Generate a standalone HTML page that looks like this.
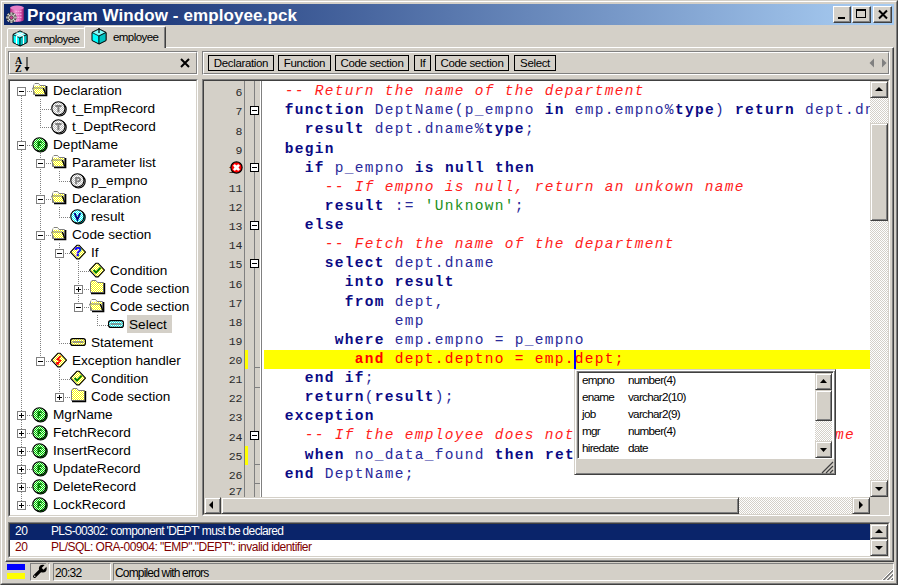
<!DOCTYPE html>
<html>
<head>
<meta charset="utf-8">
<title>Program Window - employee.pck</title>
<style>
*{box-sizing:border-box;margin:0;padding:0}
html,body{width:898px;height:585px;overflow:hidden;background:#d4d0c8;font-family:"Liberation Sans",sans-serif;}
body{position:relative}
.a{position:absolute}
svg{position:absolute;overflow:visible}
#title{left:4px;top:4px;width:890px;height:21px;background:linear-gradient(to right,#0a246a 0%,#0a246a 3%,#a6caf0 97%,#a6caf0 100%);}
#title .txt{left:23px;top:1px;color:#fff;font-weight:bold;font-size:17px;line-height:21px;white-space:nowrap;letter-spacing:0.1px}
.cbtn{top:6px;width:18px;height:17px;background:#d4d0c8;border:1px solid;border-color:#fff #404040 #404040 #fff;box-shadow:inset -1px -1px 0 #808080;}
.sb{background:#d4d0c8;border:1px solid;border-color:#d4d0c8 #404040 #404040 #d4d0c8;box-shadow:inset 1px 1px 0 #fff, inset -1px -1px 0 #808080;}
.track{background-color:#fff;background-image:conic-gradient(#d4d0c8 25%,#fff 0 50%,#d4d0c8 0 75%,#fff 0);background-size:2px 2px;}
.ti{font-size:13.6px;line-height:18px;height:18px;white-space:nowrap;color:#000;}
.dotv{width:1px;background-image:linear-gradient(#808080 50%,transparent 50%);background-size:1px 2px;}
.doth{height:1px;background-image:linear-gradient(to right,#808080 50%,transparent 50%);background-size:2px 1px;}
.ebox{width:9px;height:9px;background:#fff;border:1px solid #808080;}
.ebox i{position:absolute;left:1px;top:3px;width:5px;height:1px;background:#000}
.ebox b{position:absolute;left:3px;top:1px;width:1px;height:5px;background:#000}
.ln{left:204px;width:39px;text-align:right;font-family:"Liberation Mono",monospace;font-size:11.5px;letter-spacing:-0.3px;line-height:19.2px;height:19.2px;color:#2a2a2a;}
.cl{left:285px;font-family:"Liberation Mono",monospace;font-size:14.5px;letter-spacing:1.3px;line-height:19.2px;height:19.2px;white-space:pre;color:#2a2a9a;}
.cl b{font-weight:bold;color:#0a0a84}
.cl i{color:#ff1c1c;font-style:italic}
.cl u{text-decoration:none;color:#209020}
.cl em{font-style:normal;color:#ff0000}
.cl em b{color:#ff0000}
.fold{left:249px;width:9px;height:9px;background:#fff;border:1px solid #000;}
.fold i{position:absolute;left:1px;top:3px;width:5px;height:1px;background:#000}
.bc{top:55px;height:16px;border:1px solid #000;font-size:11.5px;line-height:14px;text-align:center;color:#000;white-space:nowrap;letter-spacing:-0.35px}
.pi{font-size:11.7px;line-height:17px;height:17px;color:#000;white-space:nowrap;letter-spacing:-0.72px}
.msg{font-size:12px;line-height:16px;height:16px;white-space:nowrap;letter-spacing:-0.3px}
.st{font-size:12px;line-height:16px;height:16px;white-space:nowrap;color:#000;letter-spacing:-0.3px}
.sunk{border:1px solid;border-color:#808080 #fff #fff #808080;}
</style>
</head>
<body>
<div class="a " style="left:0px;top:0px;width:898px;height:585px;border:1px solid;border-color:#d4d0c8 #404040 #404040 #d4d0c8;"></div>
<div class="a " style="left:1px;top:1px;width:896px;height:583px;border:1px solid;border-color:#fff #808080 #808080 #fff;"></div>
<div id="title" class="a"><div class="a txt">Program Window - employee.pck</div></div>
<svg class="a" style="left:5px;top:4px" width="20" height="20" viewBox="0 0 20 20"><defs><linearGradient id="cyl" x1="0" x2="1" y1="0" y2="0"><stop offset="0" stop-color="#b02878"/><stop offset="0.35" stop-color="#f090d0"/><stop offset="0.7" stop-color="#e060b8"/><stop offset="1" stop-color="#a02070"/></linearGradient></defs><path d="M5.2 3.6 V15.8 C5.2 18.6 18.8 18.6 18.8 15.8 V3.6 Z" fill="url(#cyl)"/><ellipse cx="12" cy="3.8" rx="6.8" ry="2.2" fill="#e880c8"/><path d="M10.5 7.3 h6 M10.5 10.3 h6 M10.5 13.3 h6 M10.5 16 h5" stroke="#f8c0e8" stroke-width="1.1" stroke-dasharray="1.6 0.6" fill="none"/><path d="M9.60 13.60 L11.50 13.60 M8.66 15.86 L10.01 17.21 M6.40 16.80 L6.40 18.70 M4.14 15.86 L2.79 17.21 M3.20 13.60 L1.30 13.60 M4.14 11.34 L2.79 9.99 M6.40 10.40 L6.40 8.50 M8.66 11.34 L10.01 9.99 " stroke="#303030" stroke-width="3.2" fill="none"/><path d="M9.60 13.60 L11.50 13.60 M8.66 15.86 L10.01 17.21 M6.40 16.80 L6.40 18.70 M4.14 15.86 L2.79 17.21 M3.20 13.60 L1.30 13.60 M4.14 11.34 L2.79 9.99 M6.40 10.40 L6.40 8.50 M8.66 11.34 L10.01 9.99 " stroke="#e8e8e0" stroke-width="2" fill="none"/><circle cx="6.4" cy="13.6" r="3.6" fill="#e8e8e0" stroke="#303030" stroke-width="0.6"/><circle cx="6.4" cy="13.6" r="1.9" fill="#c04890" stroke="#303030" stroke-width="0.8"/></svg>
<div class="a cbtn" style="left:833px;top:6px;width:18px;height:17px;"></div>
<div class="a cbtn" style="left:852px;top:6px;width:19px;height:17px;"></div>
<div class="a cbtn" style="left:873px;top:6px;width:19px;height:17px;"></div>
<div class="a " style="left:838px;top:17px;width:7px;height:2px;background:#000"></div>
<div class="a " style="left:856px;top:9px;width:10px;height:9px;border:1px solid #000;border-top:2px solid #000"></div>
<svg class="a" style="left:877.5px;top:10px" width="10" height="9" viewBox="0 0 10 9"><path d="M1 0.5 L9 8.5 M9 0.5 L1 8.5" stroke="#000" stroke-width="2" fill="none"/></svg>
<div class="a " style="left:5px;top:47px;width:889px;height:515px;border:1px solid;border-color:#fff #404040 #404040 #fff;box-shadow:inset -1px -1px 0 #808080;"></div>
<div class="a " style="left:7px;top:28px;width:78px;height:19px;border:1px solid;border-color:#fff transparent transparent #fff;border-bottom:none;border-radius:2px 2px 0 0;background:#d4d0c8;"></div>
<div class="a " style="left:84px;top:26px;width:82px;height:22px;border:1px solid;border-color:#fff #404040 transparent #fff;border-bottom:none;border-radius:2px 2px 0 0;background:#d4d0c8;box-shadow:inset -1px 0 0 #808080;"></div>
<div class="a" style="left:34px;top:31px;font-size:11.5px;line-height:16px;letter-spacing:-0.56px">employee</div>
<div class="a" style="left:113px;top:29px;font-size:11.5px;line-height:16px;letter-spacing:-0.56px">employee</div>
<svg class="a" style="left:11.5px;top:29.5px" width="16" height="17" viewBox="0 0 16 17"><path d="M8 1 L15 4.5 V12.5 L8 16 L1 12.5 V4.5 Z" fill="#00ffff" stroke="#000" stroke-width="1"/><path d="M8 1 L15 4.5 L8 8 L1 4.5 Z" fill="#80ffff" stroke="#000" stroke-width="0.8"/><path d="M8 8 V16" stroke="#000" stroke-width="0.8"/><path d="M8 8 L15 4.5 V12.5 L8 16 Z" fill="#00c0c0" stroke="#000" stroke-width="0.8"/><path d="M4.5 2.8 L11.5 6.3 V14 M11.5 2.8 L4.5 6.3 V14" stroke="#fff" stroke-width="1.2" fill="none"/></svg><svg class="a" style="left:90.5px;top:28px" width="16" height="17" viewBox="0 0 16 17"><path d="M8 1 L15 4.5 V12.5 L8 16 L1 12.5 V4.5 Z" fill="#00ffff" stroke="#000" stroke-width="1"/><path d="M8 1 L15 4.5 L8 8 L1 4.5 Z" fill="#80ffff" stroke="#000" stroke-width="0.8"/><path d="M8 8 V16" stroke="#000" stroke-width="0.8"/><path d="M8 8 L15 4.5 V12.5 L8 16 Z" fill="#00c0c0" stroke="#000" stroke-width="0.8"/><path d="M8 0 V5" stroke="#000" stroke-width="1.2"/></svg>
<div class="a " style="left:8px;top:51px;width:190px;height:24px;border:1px solid;border-color:#808080 #fff #fff #808080;"></div>
<div class="a " style="left:9px;top:52px;width:188px;height:22px;border:1px solid;border-color:#fff #808080 #808080 #fff;"></div>
<div class="a" style="left:15px;top:57px;font-size:10px;font-weight:bold;line-height:8px;font-family:'Liberation Serif',serif;color:#000">A<br>Z</div><svg class="a" style="left:23.5px;top:57px" width="6" height="15" viewBox="0 0 6 15"><path d="M3 0 V11" stroke="#000" stroke-width="1"/><path d="M0.4 10 H5.6 L3 14.6 Z" fill="#000"/></svg>
<svg class="a" style="left:180px;top:58px" width="10" height="10" viewBox="0 0 10 10"><path d="M1 1 L9 9 M9 1 L1 9" stroke="#000" stroke-width="2" fill="none"/></svg>
<div class="a " style="left:8px;top:79px;width:190px;height:438px;border:1px solid;border-color:#808080 #fff #fff #808080;background:#fff"></div>
<div class="a " style="left:9px;top:80px;width:188px;height:436px;border:1px solid;border-color:#404040 #d4d0c8 #d4d0c8 #404040;"></div>
<svg class="a" width="0" height="0" style="left:0;top:0"><defs>
<pattern id="dy" width="2" height="2" patternUnits="userSpaceOnUse"><rect width="2" height="2" fill="#ffff00"/><rect width="1" height="1" fill="#fff"/><rect x="1" y="1" width="1" height="1" fill="#fff"/></pattern>
<pattern id="dgy" width="2" height="2" patternUnits="userSpaceOnUse"><rect width="2" height="2" fill="#c0c0c0"/><rect width="1" height="1" fill="#fff"/><rect x="1" y="1" width="1" height="1" fill="#fff"/></pattern>
<pattern id="dgn" width="2" height="2" patternUnits="userSpaceOnUse"><rect width="2" height="2" fill="#00c800"/><rect width="1" height="1" fill="#d8ffd8"/><rect x="1" y="1" width="1" height="1" fill="#d8ffd8"/></pattern>
<pattern id="dc" width="2" height="2" patternUnits="userSpaceOnUse"><rect width="2" height="2" fill="#00ffff"/><rect width="1" height="1" fill="#fff"/><rect x="1" y="1" width="1" height="1" fill="#fff"/></pattern>
</defs></svg>
<div class="a dotv" style="left:21px;top:96px;height:409px"></div>
<div class="a dotv" style="left:40px;top:99px;height:29px"></div>
<div class="a dotv" style="left:40px;top:153px;height:209px"></div>
<div class="a dotv" style="left:59px;top:171px;height:11px"></div>
<div class="a dotv" style="left:59px;top:207px;height:11px"></div>
<div class="a dotv" style="left:59px;top:243px;height:101px"></div>
<div class="a dotv" style="left:78px;top:261px;height:47px"></div>
<div class="a dotv" style="left:97px;top:315px;height:11px"></div>
<div class="a dotv" style="left:59px;top:369px;height:29px"></div>
<div class="a doth" style="left:27px;top:91px;width:5px"></div>
<div class="a ebox" style="left:17px;top:87px"><i></i></div>
<svg class="a" style="left:32px;top:82px" width="16" height="14" viewBox="0 0 16 14"><path d="M1.5 12.5 V3.5 L3 1.5 H6.5 L8 3.5 H13.5 V12.5 Z" fill="url(#dy)" stroke="#808080"/><path d="M2 2.5 L3.2 2 H6.2 L7.6 3.8 H2 Z" fill="#fff"/><path d="M14.6 4 V13.5 H3" fill="none" stroke="#000" stroke-width="1.5"/><path d="M0.5 6 H11.2 L13.6 12.5 H3 Z" fill="url(#dy)" stroke="#808080" stroke-width="1"/><path d="M11.4 6 L13.8 12.6" fill="none" stroke="#000" stroke-width="1.3"/></svg>
<div class="a ti" style="left:53px;top:81.6px">Declaration</div>
<div class="a doth" style="left:40px;top:109px;width:11px"></div>
<svg class="a" style="left:51px;top:101px" width="16" height="16" viewBox="0 0 16 16"><circle cx="8.6" cy="8.4" r="6.6" fill="#c0c0c0" stroke="#000" stroke-width="1.1"/><circle cx="7.4" cy="7.4" r="6.6" fill="url(#dgy)" stroke="#000" stroke-width="1.1"/><path d="M4.3 5 H10.5 M7.4 5 V11.2" fill="none" stroke="#808080" stroke-width="2.0"/></svg>
<div class="a ti" style="left:72px;top:99.6px">t_EmpRecord</div>
<div class="a doth" style="left:40px;top:127px;width:11px"></div>
<svg class="a" style="left:51px;top:119px" width="16" height="16" viewBox="0 0 16 16"><circle cx="8.6" cy="8.4" r="6.6" fill="#c0c0c0" stroke="#000" stroke-width="1.1"/><circle cx="7.4" cy="7.4" r="6.6" fill="url(#dgy)" stroke="#000" stroke-width="1.1"/><path d="M4.3 5 H10.5 M7.4 5 V11.2" fill="none" stroke="#808080" stroke-width="2.0"/></svg>
<div class="a ti" style="left:72px;top:117.6px">t_DeptRecord</div>
<div class="a doth" style="left:27px;top:145px;width:5px"></div>
<div class="a ebox" style="left:17px;top:141px"><i></i></div>
<svg class="a" style="left:32px;top:137px" width="16" height="16" viewBox="0 0 16 16"><circle cx="8.6" cy="8.4" r="6.6" fill="#00c000" stroke="#000" stroke-width="1.1"/><circle cx="7.4" cy="7.4" r="6.6" fill="url(#dgn)" stroke="#000" stroke-width="1.1"/><path d="M6.3 10.8 V5.1 H9.6 M6.3 7.9 H8.9" fill="none" stroke="#007800" stroke-width="1.6"/></svg>
<div class="a ti" style="left:53px;top:135.6px">DeptName</div>
<div class="a doth" style="left:46px;top:163px;width:5px"></div>
<div class="a ebox" style="left:36px;top:159px"><i></i></div>
<svg class="a" style="left:51px;top:154px" width="16" height="14" viewBox="0 0 16 14"><path d="M1.5 12.5 V3.5 L3 1.5 H6.5 L8 3.5 H13.5 V12.5 Z" fill="url(#dy)" stroke="#808080"/><path d="M2 2.5 L3.2 2 H6.2 L7.6 3.8 H2 Z" fill="#fff"/><path d="M14.6 4 V13.5 H3" fill="none" stroke="#000" stroke-width="1.5"/><path d="M0.5 6 H11.2 L13.6 12.5 H3 Z" fill="url(#dy)" stroke="#808080" stroke-width="1"/><path d="M11.4 6 L13.8 12.6" fill="none" stroke="#000" stroke-width="1.3"/></svg>
<div class="a ti" style="left:72px;top:153.6px">Parameter list</div>
<div class="a doth" style="left:59px;top:181px;width:11px"></div>
<svg class="a" style="left:70px;top:173px" width="16" height="16" viewBox="0 0 16 16"><circle cx="8.6" cy="8.4" r="6.6" fill="#c0c0c0" stroke="#000" stroke-width="1.1"/><circle cx="7.4" cy="7.4" r="6.6" fill="url(#dgy)" stroke="#000" stroke-width="1.1"/><path d="M6 11.2 V4.9 H8.4 A1.7 1.7 0 0 1 8.4 8.3 H6" fill="none" stroke="#808080" stroke-width="1.8"/></svg>
<div class="a ti" style="left:91px;top:171.6px">p_empno</div>
<div class="a doth" style="left:46px;top:199px;width:5px"></div>
<div class="a ebox" style="left:36px;top:195px"><i></i></div>
<svg class="a" style="left:51px;top:190px" width="16" height="14" viewBox="0 0 16 14"><path d="M1.5 12.5 V3.5 L3 1.5 H6.5 L8 3.5 H13.5 V12.5 Z" fill="url(#dy)" stroke="#808080"/><path d="M2 2.5 L3.2 2 H6.2 L7.6 3.8 H2 Z" fill="#fff"/><path d="M14.6 4 V13.5 H3" fill="none" stroke="#000" stroke-width="1.5"/><path d="M0.5 6 H11.2 L13.6 12.5 H3 Z" fill="url(#dy)" stroke="#808080" stroke-width="1"/><path d="M11.4 6 L13.8 12.6" fill="none" stroke="#000" stroke-width="1.3"/></svg>
<div class="a ti" style="left:72px;top:189.6px">Declaration</div>
<div class="a doth" style="left:59px;top:217px;width:11px"></div>
<svg class="a" style="left:70px;top:209px" width="16" height="16" viewBox="0 0 16 16"><circle cx="8.6" cy="8.4" r="6.6" fill="#00c0c0" stroke="#000" stroke-width="1.1"/><circle cx="7.4" cy="7.4" r="6.6" fill="url(#dc)" stroke="#000" stroke-width="1.1"/><path d="M4.6 4.2 L7.4 10.6 L10.2 4.2" fill="none" stroke="#000080" stroke-width="1.9"/></svg>
<div class="a ti" style="left:91px;top:207.6px">result</div>
<div class="a doth" style="left:46px;top:235px;width:5px"></div>
<div class="a ebox" style="left:36px;top:231px"><i></i></div>
<svg class="a" style="left:51px;top:226px" width="16" height="14" viewBox="0 0 16 14"><path d="M1.5 12.5 V3.5 L3 1.5 H6.5 L8 3.5 H13.5 V12.5 Z" fill="url(#dy)" stroke="#808080"/><path d="M2 2.5 L3.2 2 H6.2 L7.6 3.8 H2 Z" fill="#fff"/><path d="M14.6 4 V13.5 H3" fill="none" stroke="#000" stroke-width="1.5"/><path d="M0.5 6 H11.2 L13.6 12.5 H3 Z" fill="url(#dy)" stroke="#808080" stroke-width="1"/><path d="M11.4 6 L13.8 12.6" fill="none" stroke="#000" stroke-width="1.3"/></svg>
<div class="a ti" style="left:72px;top:225.6px">Code section</div>
<div class="a doth" style="left:65px;top:253px;width:5px"></div>
<div class="a ebox" style="left:55px;top:249px"><i></i></div>
<svg class="a" style="left:70px;top:245px" width="16" height="16" viewBox="0 0 16 16"><path d="M6.8 0.3 H9.2 L15.5 7.1 L9.2 13.9 H6.8 L0.5 7.1 Z" fill="url(#dy)" stroke="#000" stroke-width="1.1" stroke-linejoin="round"/><text x="8" y="11.2" text-anchor="middle" font-family="Liberation Sans" font-weight="bold" font-size="12" fill="#0000ff" stroke="#0000ff" stroke-width="0.4">?</text></svg>
<div class="a ti" style="left:91px;top:243.6px">If</div>
<div class="a doth" style="left:78px;top:271px;width:11px"></div>
<svg class="a" style="left:89px;top:263px" width="16" height="16" viewBox="0 0 16 16"><path d="M6.8 0.3 H9.2 L15.5 7.1 L9.2 13.9 H6.8 L0.5 7.1 Z" fill="url(#dy)" stroke="#000" stroke-width="1.1" stroke-linejoin="round"/><path d="M4.6 7 L7 9.6 L11.6 4.6" fill="none" stroke="#008000" stroke-width="2"/></svg>
<div class="a ti" style="left:110px;top:261.6px">Condition</div>
<div class="a doth" style="left:84px;top:289px;width:5px"></div>
<div class="a ebox" style="left:74px;top:285px"><i></i><b></b></div>
<svg class="a" style="left:90px;top:280px" width="16" height="14" viewBox="0 0 16 14"><path d="M0.5 12.5 V2.5 L2 0.5 H6 L7.5 2.5 H13.5 V12.5 Z" fill="url(#dy)" stroke="#808080"/><path d="M14.5 3 V13.5 H1" fill="none" stroke="#000" stroke-width="1.4"/></svg>
<div class="a ti" style="left:110px;top:279.6px">Code section</div>
<div class="a doth" style="left:84px;top:307px;width:5px"></div>
<div class="a ebox" style="left:74px;top:303px"><i></i></div>
<svg class="a" style="left:89px;top:298px" width="16" height="14" viewBox="0 0 16 14"><path d="M1.5 12.5 V3.5 L3 1.5 H6.5 L8 3.5 H13.5 V12.5 Z" fill="url(#dy)" stroke="#808080"/><path d="M2 2.5 L3.2 2 H6.2 L7.6 3.8 H2 Z" fill="#fff"/><path d="M14.6 4 V13.5 H3" fill="none" stroke="#000" stroke-width="1.5"/><path d="M0.5 6 H11.2 L13.6 12.5 H3 Z" fill="url(#dy)" stroke="#808080" stroke-width="1"/><path d="M11.4 6 L13.8 12.6" fill="none" stroke="#000" stroke-width="1.3"/></svg>
<div class="a ti" style="left:110px;top:297.6px">Code section</div>
<div class="a doth" style="left:97px;top:325px;width:11px"></div>
<svg class="a" style="left:108px;top:320px" width="16" height="8" viewBox="0 0 16 8"><rect x="0.6" y="0.6" width="14.8" height="6.8" rx="2.2" fill="url(#dc)" stroke="#000" stroke-width="1.2"/><path d="M2.5 4h11" stroke="#808080" stroke-width="1.6"/></svg>
<div class="a" style="left:127px;top:315px;width:45px;height:18px;background:#d4d0c8"></div>
<div class="a ti" style="left:129px;top:315.6px">Select</div>
<div class="a doth" style="left:59px;top:343px;width:11px"></div>
<svg class="a" style="left:70px;top:338px" width="16" height="8" viewBox="0 0 16 8"><rect x="0.6" y="0.6" width="14.8" height="6.8" rx="2.2" fill="url(#dy)" stroke="#000" stroke-width="1.2"/><path d="M2.5 4h11" stroke="#808080" stroke-width="1.6"/></svg>
<div class="a ti" style="left:91px;top:333.6px">Statement</div>
<div class="a doth" style="left:46px;top:361px;width:5px"></div>
<div class="a ebox" style="left:36px;top:357px"><i></i></div>
<svg class="a" style="left:51px;top:353px" width="16" height="16" viewBox="0 0 16 16"><path d="M6.8 0.3 H9.2 L15.5 7.1 L9.2 13.9 H6.8 L0.5 7.1 Z" fill="url(#dy)" stroke="#000" stroke-width="1.1" stroke-linejoin="round"/><path d="M9.6 3.2 L6.4 6.2 L9.4 7.8 L6.2 10.8 M6 9 V11 H8" fill="none" stroke="#ff0000" stroke-width="1.7"/></svg>
<div class="a ti" style="left:72px;top:351.6px">Exception handler</div>
<div class="a doth" style="left:59px;top:379px;width:11px"></div>
<svg class="a" style="left:70px;top:371px" width="16" height="16" viewBox="0 0 16 16"><path d="M6.8 0.3 H9.2 L15.5 7.1 L9.2 13.9 H6.8 L0.5 7.1 Z" fill="url(#dy)" stroke="#000" stroke-width="1.1" stroke-linejoin="round"/><path d="M4.6 7 L7 9.6 L11.6 4.6" fill="none" stroke="#008000" stroke-width="2"/></svg>
<div class="a ti" style="left:91px;top:369.6px">Condition</div>
<div class="a doth" style="left:65px;top:397px;width:5px"></div>
<div class="a ebox" style="left:55px;top:393px"><i></i><b></b></div>
<svg class="a" style="left:71px;top:388px" width="16" height="14" viewBox="0 0 16 14"><path d="M0.5 12.5 V2.5 L2 0.5 H6 L7.5 2.5 H13.5 V12.5 Z" fill="url(#dy)" stroke="#808080"/><path d="M14.5 3 V13.5 H1" fill="none" stroke="#000" stroke-width="1.4"/></svg>
<div class="a ti" style="left:91px;top:387.6px">Code section</div>
<div class="a doth" style="left:27px;top:415px;width:5px"></div>
<div class="a ebox" style="left:17px;top:411px"><i></i><b></b></div>
<svg class="a" style="left:32px;top:407px" width="16" height="16" viewBox="0 0 16 16"><circle cx="8.6" cy="8.4" r="6.6" fill="#00c000" stroke="#000" stroke-width="1.1"/><circle cx="7.4" cy="7.4" r="6.6" fill="url(#dgn)" stroke="#000" stroke-width="1.1"/><path d="M6.3 10.8 V5.1 H9.6 M6.3 7.9 H8.9" fill="none" stroke="#007800" stroke-width="1.6"/></svg>
<div class="a ti" style="left:53px;top:405.6px">MgrName</div>
<div class="a doth" style="left:27px;top:433px;width:5px"></div>
<div class="a ebox" style="left:17px;top:429px"><i></i><b></b></div>
<svg class="a" style="left:32px;top:425px" width="16" height="16" viewBox="0 0 16 16"><circle cx="8.6" cy="8.4" r="6.6" fill="#00c000" stroke="#000" stroke-width="1.1"/><circle cx="7.4" cy="7.4" r="6.6" fill="url(#dgn)" stroke="#000" stroke-width="1.1"/><path d="M6.3 10.8 V5.1 H9.6 M6.3 7.9 H8.9" fill="none" stroke="#007800" stroke-width="1.6"/></svg>
<div class="a ti" style="left:53px;top:423.6px">FetchRecord</div>
<div class="a doth" style="left:27px;top:451px;width:5px"></div>
<div class="a ebox" style="left:17px;top:447px"><i></i><b></b></div>
<svg class="a" style="left:32px;top:443px" width="16" height="16" viewBox="0 0 16 16"><circle cx="8.6" cy="8.4" r="6.6" fill="#00c000" stroke="#000" stroke-width="1.1"/><circle cx="7.4" cy="7.4" r="6.6" fill="url(#dgn)" stroke="#000" stroke-width="1.1"/><path d="M6.3 10.8 V5.1 H9.6 M6.3 7.9 H8.9" fill="none" stroke="#007800" stroke-width="1.6"/></svg>
<div class="a ti" style="left:53px;top:441.6px">InsertRecord</div>
<div class="a doth" style="left:27px;top:469px;width:5px"></div>
<div class="a ebox" style="left:17px;top:465px"><i></i><b></b></div>
<svg class="a" style="left:32px;top:461px" width="16" height="16" viewBox="0 0 16 16"><circle cx="8.6" cy="8.4" r="6.6" fill="#00c000" stroke="#000" stroke-width="1.1"/><circle cx="7.4" cy="7.4" r="6.6" fill="url(#dgn)" stroke="#000" stroke-width="1.1"/><path d="M6.3 10.8 V5.1 H9.6 M6.3 7.9 H8.9" fill="none" stroke="#007800" stroke-width="1.6"/></svg>
<div class="a ti" style="left:53px;top:459.6px">UpdateRecord</div>
<div class="a doth" style="left:27px;top:487px;width:5px"></div>
<div class="a ebox" style="left:17px;top:483px"><i></i><b></b></div>
<svg class="a" style="left:32px;top:479px" width="16" height="16" viewBox="0 0 16 16"><circle cx="8.6" cy="8.4" r="6.6" fill="#00c000" stroke="#000" stroke-width="1.1"/><circle cx="7.4" cy="7.4" r="6.6" fill="url(#dgn)" stroke="#000" stroke-width="1.1"/><path d="M6.3 10.8 V5.1 H9.6 M6.3 7.9 H8.9" fill="none" stroke="#007800" stroke-width="1.6"/></svg>
<div class="a ti" style="left:53px;top:477.6px">DeleteRecord</div>
<div class="a doth" style="left:27px;top:505px;width:5px"></div>
<div class="a ebox" style="left:17px;top:501px"><i></i><b></b></div>
<svg class="a" style="left:32px;top:497px" width="16" height="16" viewBox="0 0 16 16"><circle cx="8.6" cy="8.4" r="6.6" fill="#00c000" stroke="#000" stroke-width="1.1"/><circle cx="7.4" cy="7.4" r="6.6" fill="url(#dgn)" stroke="#000" stroke-width="1.1"/><path d="M6.3 10.8 V5.1 H9.6 M6.3 7.9 H8.9" fill="none" stroke="#007800" stroke-width="1.6"/></svg>
<div class="a ti" style="left:53px;top:495.6px">LockRecord</div>
<div class="a " style="left:202px;top:51px;width:688px;height:24px;border:1px solid;border-color:#808080 #fff #fff #808080;"></div>
<div class="a " style="left:203px;top:52px;width:686px;height:22px;border:1px solid;border-color:#fff #808080 #808080 #fff;"></div>
<div class="a bc" style="left:208px;width:66px">Declaration</div>
<div class="a bc" style="left:278px;width:53px">Function</div>
<div class="a bc" style="left:335px;width:74px">Code section</div>
<div class="a bc" style="left:414px;width:17px">If</div>
<div class="a bc" style="left:435px;width:74px">Code section</div>
<div class="a bc" style="left:514px;width:42px">Select</div>
<svg class="a" style="left:869px;top:58px" width="18" height="10" viewBox="0 0 18 10"><path d="M5 0.5 L5 9.5 L0.5 5 Z" fill="#808080"/><path d="M13 0.5 L13 9.5 L17.5 5 Z" fill="#808080"/><path d="M6 1v9M14 1 v0" stroke="#fff" stroke-width="0"/></svg>
<div class="a " style="left:202px;top:79px;width:688px;height:437px;border:1px solid;border-color:#808080 #fff #fff #808080;background:#fff"></div>
<div class="a " style="left:203px;top:80px;width:686px;height:435px;border:1px solid;border-color:#404040 #d4d0c8 #d4d0c8 #404040;"></div>
<div class="a " style="left:204px;top:81px;width:58px;height:416px;background:#d4d0c8"></div>
<div class="a" style="left:262px;top:81px;width:608px;height:416px;overflow:hidden;background:#fff">
<div class="a" style="left:2px;top:269px;width:606px;height:19px;background:#ffff00"></div>
<div class="a cl" style="left:22.80000000000001px;top:0.83px"><i>-- Return the name of the department</i></div>
<div class="a cl" style="left:22.80000000000001px;top:19.83px"><b>function</b> DeptName(p_empno <b>in</b> emp.empno%<b>type</b>) <b>return</b> dept.dname%<b>type</b> <b>is</b></div>
<div class="a cl" style="left:22.80000000000001px;top:38.83px">  <b>result</b> dept.dname%<b>type</b>;</div>
<div class="a cl" style="left:22.80000000000001px;top:58.83px"><b>begin</b></div>
<div class="a cl" style="left:22.80000000000001px;top:77.83px">  <b>if</b> p_empno <b>is</b> <b>null</b> <b>then</b></div>
<div class="a cl" style="left:22.80000000000001px;top:96.83px">    <i>-- If empno is null, return an unkown name</i></div>
<div class="a cl" style="left:22.80000000000001px;top:115.83px">    <b>result</b> := <u>'Unknown'</u>;</div>
<div class="a cl" style="left:22.80000000000001px;top:134.83px">  <b>else</b></div>
<div class="a cl" style="left:22.80000000000001px;top:153.83px">    <i>-- Fetch the name of the department</i></div>
<div class="a cl" style="left:22.80000000000001px;top:172.83px">    <b>select</b> dept.dname</div>
<div class="a cl" style="left:22.80000000000001px;top:191.83px">      <b>into</b> <b>result</b></div>
<div class="a cl" style="left:22.80000000000001px;top:211.83px">      <b>from</b> dept,</div>
<div class="a cl" style="left:22.80000000000001px;top:230.83px">           emp</div>
<div class="a cl" style="left:22.80000000000001px;top:249.83px">     <b>where</b> emp.empno = p_empno</div>
<div class="a cl" style="left:22.80000000000001px;top:268.83px"><em>       <b>and</b> dept.deptno = emp.dept;</em></div>
<div class="a cl" style="left:22.80000000000001px;top:287.83px">  <b>end</b> <b>if</b>;</div>
<div class="a cl" style="left:22.80000000000001px;top:306.83px">  <b>return</b>(<b>result</b>);</div>
<div class="a cl" style="left:22.80000000000001px;top:325.83px"><b>exception</b></div>
<div class="a cl" style="left:22.80000000000001px;top:344.83px">  <i>-- If the employee does not exist return an unkown name</i></div>
<div class="a cl" style="left:22.80000000000001px;top:364.83px">  <b>when</b> no_data_found <b>then</b> <b>return</b>(<u>'Unknown'</u>);</div>
<div class="a cl" style="left:22.80000000000001px;top:383.83px"><b>end</b> DeptName;</div>
<div class="a cl" style="left:22.80000000000001px;top:402.83px"></div>
<div class="a" style="left:312px;top:269px;width:2px;height:19px;background:#0000ff"></div>
</div>
<div class="a" style="left:205px;top:81px;width:57px;height:416px;overflow:hidden">
<div class="a" style="left:39px;top:0;width:1px;height:416px;background:#808080"></div>
<div class="a" style="left:49px;top:0;width:1px;height:416px;background:#808080"></div>
<div class="a" style="left:55px;top:0;width:1px;height:416px;background:#fff"></div>
<div class="a" style="left:56px;top:0;width:1px;height:416px;background:#808080"></div>
<div class="a ln" style="left:0;width:37px;top:1.90px">6</div>
<div class="a ln" style="left:0;width:37px;top:20.90px">7</div>
<div class="a fold" style="left:45px;top:25px"><i></i></div>
<div class="a ln" style="left:0;width:37px;top:40.90px">8</div>
<div class="a ln" style="left:0;width:37px;top:59.90px">9</div>
<div class="a fold" style="left:45px;top:82px"><i></i></div>
<div class="a ln" style="left:0;width:37px;top:97.90px">11</div>
<div class="a ln" style="left:0;width:37px;top:116.90px">12</div>
<div class="a ln" style="left:0;width:37px;top:135.90px">13</div>
<div class="a fold" style="left:45px;top:140px"><i></i></div>
<div class="a ln" style="left:0;width:37px;top:154.90px">14</div>
<div class="a ln" style="left:0;width:37px;top:173.90px">15</div>
<div class="a fold" style="left:45px;top:178px"><i></i></div>
<div class="a ln" style="left:0;width:37px;top:193.90px">16</div>
<div class="a ln" style="left:0;width:37px;top:212.90px">17</div>
<div class="a ln" style="left:0;width:37px;top:231.90px">18</div>
<div class="a ln" style="left:0;width:37px;top:250.90px">19</div>
<div class="a ln" style="left:0;width:37px;top:269.90px">20</div>
<div class="a ln" style="left:0;width:37px;top:288.90px">21</div>
<div class="a ln" style="left:0;width:37px;top:307.90px">22</div>
<div class="a ln" style="left:0;width:37px;top:326.90px">23</div>
<div class="a ln" style="left:0;width:37px;top:346.90px">24</div>
<div class="a fold" style="left:45px;top:350px"><i></i></div>
<div class="a ln" style="left:0;width:37px;top:365.90px">25</div>
<div class="a ln" style="left:0;width:37px;top:384.90px">26</div>
<div class="a ln" style="left:0;width:37px;top:400.90px">27</div>
<div class="a" style="left:49px;top:286px;width:6px;height:1px;background:#808080"></div>
<div class="a" style="left:49px;top:306px;width:6px;height:1px;background:#808080"></div>
<div class="a" style="left:49px;top:383px;width:6px;height:1px;background:#808080"></div>
<div class="a" style="left:49px;top:402px;width:6px;height:1px;background:#808080"></div>
<div class="a" style="left:40px;top:269px;width:3px;height:19px;background:#ffff00"></div>
<div class="a" style="left:40px;top:365px;width:3px;height:19px;background:#ffff00"></div>
<div class="a ln" style="left:0;width:30px;top:78.90px">1</div>
<svg class="a" style="left:25px;top:80px" width="13" height="13" viewBox="0 0 13 13"><circle cx="6.5" cy="6.5" r="5.6" fill="#ff0000" stroke="#000" stroke-width="1.2"/><path d="M3.9 3.9 L9.1 9.1 M9.1 3.9 L3.9 9.1" stroke="#fff" stroke-width="2.7"/><rect x="4.6" y="4.6" width="3.8" height="3.8" fill="#fff"/></svg>
</div>
<div class="a" style="left:574px;top:369px;width:262px;height:106px;background:#d4d0c8;border:1px solid;border-color:#d4d0c8 #404040 #404040 #d4d0c8;box-shadow:inset 1px 1px 0 #fff, inset -1px -1px 0 #808080;">
<div class="a" style="left:2px;top:1px;width:257px;height:88px;background:#fff;border:1px solid;border-color:#808080 #fff #fff #808080;box-shadow:inset 1px 1px 0 #404040"></div>
<div class="a pi" style="left:7px;top:1px">empno</div>
<div class="a pi" style="left:53px;top:1px">number(4)</div>
<div class="a pi" style="left:7px;top:18px">ename</div>
<div class="a pi" style="left:53px;top:18px">varchar2(10)</div>
<div class="a pi" style="left:7px;top:35px">job</div>
<div class="a pi" style="left:53px;top:35px">varchar2(9)</div>
<div class="a pi" style="left:7px;top:52px">mgr</div>
<div class="a pi" style="left:53px;top:52px">number(4)</div>
<div class="a pi" style="left:7px;top:69px">hiredate</div>
<div class="a pi" style="left:53px;top:69px">date</div>
<div class="a track" style="left:240px;top:3px;width:17px;height:85px"></div>
<div class="a sb" style="left:240px;top:3px;width:17px;height:17px"></div>
<div class="a sb" style="left:240px;top:71px;width:17px;height:17px"></div>
<div class="a sb" style="left:240px;top:20px;width:17px;height:31px"></div>
<svg class="a" style="left:245px;top:9px" width="7" height="4" viewBox="0 0 7 4"><path d="M0 4 L3.5 0 L7 4Z" fill="#000"/></svg>
<svg class="a" style="left:245px;top:78px" width="7" height="4" viewBox="0 0 7 4"><path d="M0 0 L3.5 4 L7 0Z" fill="#000"/></svg>
<svg class="a" style="left:246px;top:91px" width="12" height="12" viewBox="0 0 12 12"><path d="M12 1 L1 12 M12 5 L5 12 M12 9 L9 12" stroke="#404040" stroke-width="1.2"/></svg>
</div>
<div class="a track" style="left:870px;top:81px;width:18px;height:416px;"></div>
<div class="a sb" style="left:870px;top:81px;width:18px;height:17px;"></div>
<div class="a sb" style="left:870px;top:480px;width:18px;height:17px;"></div>
<div class="a sb" style="left:870px;top:123px;width:18px;height:98px;"></div>
<svg class="a" style="left:875px;top:87px" width="8" height="4" viewBox="0 0 8 4"><path d="M0 4 L4 0 L8 4Z" fill="#000"/></svg>
<svg class="a" style="left:875px;top:487px" width="8" height="4" viewBox="0 0 8 4"><path d="M0 0 L4 4 L8 0Z" fill="#000"/></svg>
<div class="a track" style="left:204px;top:497px;width:666px;height:17px;"></div>
<div class="a sb" style="left:204px;top:497px;width:17px;height:17px;"></div>
<div class="a sb" style="left:852px;top:497px;width:18px;height:17px;"></div>
<div class="a sb" style="left:221px;top:497px;width:518px;height:17px;"></div>
<svg class="a" style="left:209px;top:501px" width="4" height="8" viewBox="0 0 4 8"><path d="M4 0 L0 4 L4 8Z" fill="#000"/></svg>
<svg class="a" style="left:859px;top:501px" width="4" height="8" viewBox="0 0 4 8"><path d="M0 0 L4 4 L0 8Z" fill="#000"/></svg>
<div class="a " style="left:870px;top:497px;width:18px;height:17px;background:#d4d0c8"></div>
<div class="a " style="left:8px;top:522px;width:882px;height:36px;border:1px solid;border-color:#808080 #fff #fff #808080;background:#fff"></div>
<div class="a " style="left:9px;top:523px;width:880px;height:34px;border:1px solid;border-color:#404040 #d4d0c8 #d4d0c8 #404040;"></div>
<div class="a " style="left:10px;top:524px;width:860px;height:16px;background:#0a246a"></div>
<div class="a msg" style="left:15px;top:523px;color:#fff">20</div>
<div class="a msg" style="left:51px;top:523px;color:#fff;letter-spacing:-0.66px">PLS-00302: component 'DEPT' must be declared</div>
<div class="a msg" style="left:15px;top:539px;color:#800000">20</div>
<div class="a msg" style="left:51px;top:539px;color:#800000;letter-spacing:-0.51px">PL/SQL: ORA-00904: "EMP"."DEPT": invalid identifier</div>
<div class="a sb" style="left:870px;top:524px;width:18px;height:15px;"></div>
<div class="a sb" style="left:870px;top:539px;width:18px;height:17px;"></div>
<svg class="a" style="left:875px;top:529px" width="8" height="4" viewBox="0 0 8 4"><path d="M0 4 L4 0 L8 4Z" fill="#000"/></svg>
<svg class="a" style="left:875px;top:546px" width="8" height="4" viewBox="0 0 8 4"><path d="M0 0 L4 4 L8 0Z" fill="#000"/></svg>
<div class="a " style="left:7px;top:564px;width:18px;height:6px;background:#0000ff"></div>
<div class="a " style="left:7px;top:573px;width:18px;height:6px;background:#ffff00"></div>
<div class="a sunk" style="left:30px;top:563px;width:20px;height:18px;"></div>
<div class="a sunk" style="left:53px;top:563px;width:58px;height:18px;"></div>
<div class="a sunk" style="left:113px;top:563px;width:781px;height:18px;"></div>
<div class="a st" style="left:55px;top:565px;letter-spacing:-0.7px">20:32</div>
<div class="a st" style="left:115px;top:565px;letter-spacing:-0.83px">Compiled with errors</div>
<svg class="a" style="left:32px;top:564px" width="16" height="15" viewBox="0 0 16 15"><path d="M2.6 12.4 L9.6 5.4" stroke="#000" stroke-width="3.2" stroke-linecap="round"/><circle cx="10.8" cy="4.6" r="3.9" fill="#000"/><path d="M10.6 4.8 L16 -0.6" stroke="#d4d0c8" stroke-width="2.6"/><circle cx="2.7" cy="12.3" r="0.8" fill="#d4d0c8"/></svg>
<svg class="a" style="left:881px;top:568px" width="12" height="12" viewBox="0 0 12 12"><path d="M12 1 L1 12 M12 5 L5 12 M12 9 L9 12" stroke="#fff" stroke-width="1"/><path d="M12 2 L2 12 M12 3 L3 12 M12 6 L6 12 M12 7 L7 12 M12 10 L10 12 M12 11 L11 12" stroke="#808080" stroke-width="1"/></svg>
</body>
</html>
